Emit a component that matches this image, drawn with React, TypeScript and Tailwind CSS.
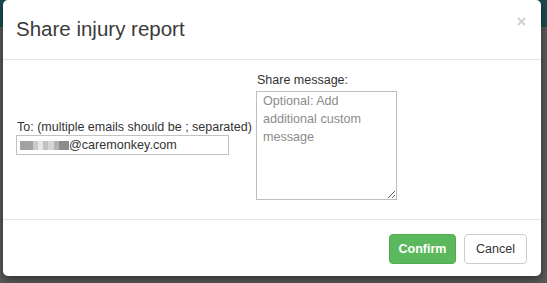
import React from "react";

const blur = [
  { w: "w-[13px]", c: "bg-[#a2a2a2]" },
  { w: "w-[5px]", c: "bg-[#c9c9c9]" },
  { w: "w-[5px]", c: "bg-[#e6e6e6]" },
  { w: "w-[5px]", c: "bg-[#c2c2c2]" },
  { w: "w-[6px]", c: "bg-[#d6d6d6]" },
  { w: "w-[5px]", c: "bg-[#b3b3b3]" },
  { w: "w-[10px]", c: "bg-[#8c8c8c]" },
];

export default function App() {
  return (
    <div className="relative h-[283px] w-[547px] overflow-hidden bg-[#5a5a5a] font-['Liberation_Sans',Arial,sans-serif] text-[#333]">
      <div className="h-[27px] bg-[#1c4b53]" />

      {/* share dialog */}
      <div className="absolute left-[3px] top-0 w-[538px] rounded-[5px] bg-white shadow-[0_3px_9px_rgba(0,0,0,0.5)]">
        <div className="relative border-b border-[#e5e5e5] px-[13px] pt-[15px] pb-[16px]">
          <h4 className="text-[20.5px] leading-[28px] text-[#3a3a3a]">Share injury report</h4>
          <button className="absolute right-[15px] top-[17px]" aria-label="Close">
            <svg width="9" height="9" viewBox="0 0 9 9">
              <path d="M1 1L8 8M8 1L1 8" stroke="#cfcfcf" strokeWidth="1.8" />
            </svg>
          </button>
        </div>

        <div className="flex items-center px-[13px] pt-[12px] pb-[19px]">
          <div className="mt-[2px] w-[240px]">
            <label className="block pl-[1px] text-[12.5px] leading-[16px]">
              To: (multiple emails should be ; separated)
            </label>
            <div className="flex h-[20px] w-[213px] items-center border border-[#c2c2c2] pl-[3px] text-[12.6px] leading-[18px]">
              {blur.map((b, i) => (
                <span key={i} className={`inline-block h-[9px] ${b.w} ${b.c}`} />
              ))}
              <span>@caremonkey.com</span>
            </div>
          </div>
          <div>
            <label className="mb-[2px] block pl-[1px] text-[12.5px] leading-[17px]">Share message:</label>
            <textarea
              className="block h-[109px] w-[141px] border border-[#bdbdbd] px-[6px] pt-0 text-[12.6px] leading-[18px] placeholder:text-[#8c8c8c] outline-none"
              placeholder="Optional: Add additional custom message"
            />
          </div>
        </div>

        <div className="flex justify-end gap-[8px] border-t border-[#e5e5e5] pt-[14px] pb-[12px] pr-[14px]">
          <button className="h-[30px] w-[67px] rounded-[4px] border border-[#4cae4c] bg-[#5cb85c] text-[12.5px] font-bold text-white">
            Confirm
          </button>
          <button className="h-[30px] w-[63px] rounded-[4px] border border-[#ccc] bg-white text-[12.5px] text-[#333]">
            Cancel
          </button>
        </div>
      </div>
    </div>
  );
}
